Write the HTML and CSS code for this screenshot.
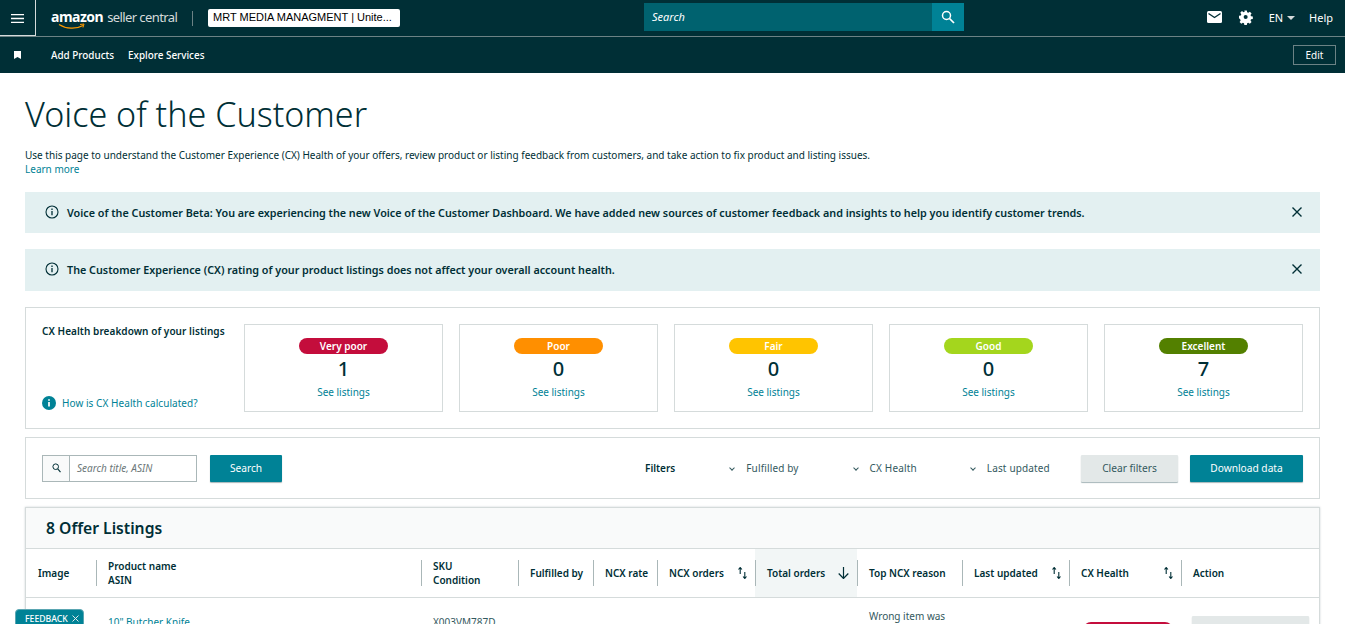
FILE: index.html
```html
<!DOCTYPE html>
<html lang="en">
<head>
  <meta charset="UTF-8">
  <title>Voice of the Customer</title>
  <link rel="stylesheet" href="styles.css">
</head>
<body>

<header class="topbar">
  <div class="topbar-left">
    <button class="menu-btn" aria-label="Menu">
      <svg width="13" height="9" viewBox="0 0 13 9"><path d="M0 .7h13M0 4.500h13M0 8.300h13" stroke="#fff" stroke-width="1.300"/></svg>
    </button>
    <div class="logo">
      <span class="logo-word">amazon</span><span class="logo-rest">seller central</span>
      <svg class="logo-smile" width="28" height="7" viewBox="0 0 28 7"><path d="M1 1.500C8 6 18 6.500 25 2.500" fill="none" stroke="#f90" stroke-width="1.200"/><path d="M22 1.500l4-.5-1 3.500" fill="none" stroke="#f90" stroke-width="1"/></svg>
    </div>
    <span class="logo-sep"></span>
    <div class="account">MRT MEDIA MANAGMENT | Unite...</div>
  </div>
  <div class="global-search">
    <span class="global-search-input">Search</span>
    <span class="global-search-btn">
      <svg width="14" height="14" viewBox="0 0 14 14"><circle cx="5.500" cy="5.500" r="4" fill="none" stroke="#fff" stroke-width="1.500"/><path d="M8.500 8.500L13 13" stroke="#fff" stroke-width="1.700"/></svg>
    </span>
  </div>
  <div class="topbar-right">
    <svg class="mail-icon" width="15" height="12" viewBox="0 0 15 12"><rect width="15" height="12" rx="1.500" fill="#fff"/><path d="M1.500 2.500l6 4 6-4" fill="none" stroke="#002f36" stroke-width="1.400"/></svg>
    <svg class="gear-icon" width="14" height="15" viewBox="0 0 16 16"><path d="M6.500 0h3l.4 2.200 1.400.6L13.200 1.500l2.100 2.100-1.300 1.900.6 1.400 2.200.4v3l-2.200.4-.6 1.400 1.300 1.900-2.100 2.100-1.900-1.300-1.400.6-.4 2.200h-3l-.4-2.200-1.400-.6-1.900 1.300-2.100-2.100 1.300-1.900-.6-1.400L0 9.500v-3l2.200-.4.6-1.400L1.500 2.800 3.600.7l1.900 1.300 1.400-.6z" transform="scale(.94)" fill="#fff"/><circle cx="7.600" cy="7.500" r="2.300" fill="#002f36"/></svg>
    <span class="lang">EN <i class="caret"></i></span>
    <span class="help">Help</span>
  </div>
</header>

<nav class="subbar">
  <svg class="bookmark" width="7" height="8" viewBox="0 0 7 8"><path d="M0 0h7v8L3.500 6 0 8z" fill="#fff"/></svg>
  <a class="subbar-link">Add Products</a>
  <a class="subbar-link">Explore Services</a>
  <button class="edit-btn">Edit</button>
</nav>

<main class="page">
  <h1>Voice of the Customer</h1>
  <p class="intro">Use this page to understand the Customer Experience (CX) Health of your offers, review product or listing feedback from customers, and take action to fix product and listing issues.<br><a>Learn more</a></p>

  <div class="notice">
    <svg width="14" height="14" viewBox="0 0 14 14"><circle cx="7" cy="7" r="6" fill="none" stroke="#002f36" stroke-width="1.100"/><path d="M7 6v4.200M7 3.600v1.400" stroke="#002f36" stroke-width="1.300"/></svg>
    <span class="notice-text">Voice of the Customer Beta: You are experiencing the new Voice of the Customer Dashboard. We have added new sources of customer feedback and insights to help you identify customer trends.</span>
    <svg class="notice-close" width="10" height="10" viewBox="0 0 10 10"><path d="M.5.500l9 9M9.500.500l-9 9" stroke="#002f36" stroke-width="1.400"/></svg>
  </div>
  <div class="notice notice-second">
    <svg width="14" height="14" viewBox="0 0 14 14"><circle cx="7" cy="7" r="6" fill="none" stroke="#002f36" stroke-width="1.100"/><path d="M7 6v4.200M7 3.600v1.400" stroke="#002f36" stroke-width="1.300"/></svg>
    <span class="notice-text">The Customer Experience (CX) rating of your product listings does not affect your overall account health.</span>
    <svg class="notice-close" width="10" height="10" viewBox="0 0 10 10"><path d="M.5.500l9 9M9.500.500l-9 9" stroke="#002f36" stroke-width="1.400"/></svg>
  </div>

  <section class="breakdown">
    <div class="breakdown-side">
      <div class="breakdown-title">CX Health breakdown of your listings</div>
      <a class="breakdown-help">
        <svg width="14" height="14" viewBox="0 0 14 14"><circle cx="7" cy="7" r="7" fill="#008296"/><path d="M7 6v4.500M7 3.200v1.600" stroke="#fff" stroke-width="1.700"/></svg>
        How is CX Health calculated?
      </a>
    </div>
    <div class="health-card"><span class="pill very-poor">Very poor</span><strong>1</strong><a>See listings</a></div>
    <div class="health-card"><span class="pill poor">Poor</span><strong>0</strong><a>See listings</a></div>
    <div class="health-card"><span class="pill fair">Fair</span><strong>0</strong><a>See listings</a></div>
    <div class="health-card"><span class="pill good">Good</span><strong>0</strong><a>See listings</a></div>
    <div class="health-card"><span class="pill excellent">Excellent</span><strong>7</strong><a>See listings</a></div>
  </section>

  <section class="toolbar">
    <div class="search-box">
      <span class="search-box-icon">
        <svg width="9" height="10" viewBox="0 0 9 10"><circle cx="3.700" cy="3.700" r="2.800" fill="none" stroke="#002f36" stroke-width="1"/><path d="M5.700 5.900L8.500 9.200" stroke="#002f36" stroke-width="1.100"/></svg>
      </span>
      <span class="search-box-input">Search title, ASIN</span>
    </div>
    <button class="btn btn-primary btn-search">Search</button>
    <span class="filters-label">Filters</span>
    <span class="filter filter-fulfilled"><i class="chev"></i>Fulfilled by</span>
    <span class="filter filter-health"><i class="chev"></i>CX Health</span>
    <span class="filter filter-updated"><i class="chev"></i>Last updated</span>
    <button class="btn btn-light">Clear filters</button>
    <button class="btn btn-primary btn-download">Download data</button>
  </section>

  <section class="listings">
    <h2>8 Offer Listings</h2>
    <div class="table-head">
      <div class="th"><span>Image</span></div>
      <div class="th"><span>Product name<br>ASIN</span></div>
      <div class="th"><span>SKU<br>Condition</span></div>
      <div class="th"><span>Fulfilled by</span></div>
      <div class="th"><span>NCX rate</span></div>
      <div class="th th-sort"><span>NCX orders</span><svg width="9" height="12" viewBox="0 0 9 12"><path d="M2.200 7V1M.5 2.500L2.200.5 3.900 2.500M6.800 5v6M5.100 9.500l1.700 2 1.700-2" fill="none" stroke="#002f36" stroke-width="1.100"/></svg></div>
      <div class="th th-sort th-active"><span>Total orders</span><svg width="11" height="12" viewBox="0 0 11 12"><path d="M5.500 0v11M.7 6.500l4.800 5 4.800-5" fill="none" stroke="#002f36" stroke-width="1.200"/></svg></div>
      <div class="th"><span>Top NCX reason</span></div>
      <div class="th th-sort"><span>Last updated</span><svg width="9" height="12" viewBox="0 0 9 12"><path d="M2.200 7V1M.5 2.500L2.200.5 3.900 2.500M6.800 5v6M5.100 9.500l1.700 2 1.700-2" fill="none" stroke="#002f36" stroke-width="1.100"/></svg></div>
      <div class="th th-sort"><span>CX Health</span><svg width="9" height="12" viewBox="0 0 9 12"><path d="M2.200 7V1M.5 2.500L2.200.5 3.900 2.500M6.800 5v6M5.100 9.500l1.700 2 1.700-2" fill="none" stroke="#002f36" stroke-width="1.100"/></svg></div>
      <div class="th"><span>Action</span></div>
    </div>
    <div class="table-row">
      <div></div>
      <div class="td-name"><a>10" Butcher Knife</a></div>
      <div class="td-sku">X003VM787D</div>
      <div></div><div></div><div></div><div></div>
      <div class="td-reason">Wrong item was</div>
      <div></div>
      <div class="td-health"><span class="pill very-poor"></span></div>
      <div class="td-action"><button class="btn btn-light"></button></div>
    </div>
  </section>
</main>

<div class="feedback">
  <span>FEEDBACK</span>
  <svg width="7" height="7" viewBox="0 0 7 7"><path d="M.5.500l6 6M6.500.500l-6 6" stroke="#e3e8e8" stroke-width="1"/></svg>
</div>

</body>
</html>
```

FILE: styles.css
```css
html, body {
  height: 624px;
  overflow: hidden;
}

body {
  margin: 0;
  font-family: "Noto Sans", "Open Sans", Arial, sans-serif;
  font-size: 11px;
  color: #002f36;
  background-color: #fff;
}

a {
  color: #008296;
}

button {
  font-family: inherit;
  cursor: pointer;
}

/* top bars */
.topbar {
  height: 36px;
  background-color: #002f36;
  border-bottom: 1px solid #6c8285;
  display: flex;
  align-items: center;
  justify-content: space-between;
  position: relative;
  color: #fff;
}

.topbar-left {
  display: flex;
  align-items: center;
  height: 100%;
}

.menu-btn {
  width: 36px;
  height: 36px;
  padding: 0;
  background: none;
  border: 1px solid #d5dbdb;
  border-width: 0 1px 1px 0;
}

.logo {
  margin-left: 15px;
  position: relative;
  white-space: nowrap;
  font-size: 14px;
  line-height: 16px;
  width: 127px;
  top: -1px;
}

.logo-word {
  font-weight: 700;
  letter-spacing: -0.5px;
  margin-right: 4px;
}

.logo-rest {
  font-size: 13px;
  font-weight: 400;
  letter-spacing: -0.6px;
  color: #d5dbdb;
}

.logo-smile {
  position: absolute;
  left: 7px;
  top: 14px;
}

.logo-sep {
  width: 1px;
  height: 15px;
  background-color: #6c8285;
  margin: 0 15px 0 14px;
}

.account {
  width: 192px;
  height: 18px;
  box-sizing: border-box;
  background-color: #fff;
  border-radius: 2px;
  color: #000;
  font-family: "Liberation Sans", Arial, sans-serif;
  font-size: 11px;
  line-height: 17px;
  padding-left: 5px;
  white-space: nowrap;
}

.global-search {
  position: absolute;
  left: 644px;
  top: 3px;
  width: 320px;
  height: 28px;
  display: flex;
  background-color: #00626f;
}

.global-search-input {
  flex: 1;
  padding-left: 8px;
  font-style: italic;
  font-size: 11px;
  line-height: 28px;
}

.global-search-btn {
  width: 32px;
  background-color: #008296;
  display: flex;
  align-items: center;
  justify-content: center;
}

.topbar-right {
  display: flex;
  align-items: center;
  gap: 16px;
  padding: 0 12px 2px 0;
}

.mail-icon {
  margin-right: 1px;
}

.lang {
  margin-right: -2px;
}

.caret {
  display: inline-block;
  border: 4px solid transparent;
  border-top-color: #d5dbdb;
  border-bottom: 0;
  vertical-align: 2px;
  margin-left: 1px;
}

.subbar {
  height: 36px;
  background-color: #002f36;
  display: flex;
  align-items: center;
  color: #fff;
  padding: 0 9px 0 14px;
}

.bookmark {
  margin-right: 30px;
}

.subbar-link {
  color: #fff;
  font-size: 9.900px;
  font-weight: 500;
  margin-right: 14px;
}

.edit-btn {
  margin-left: auto;
  width: 43px;
  height: 20px;
  padding: 0;
  background: none;
  border: 1px solid #6c8285;
  color: #fff;
  font-size: 10px;
}

/* page */
.page {
  padding: 0 25px;
}

h1 {
  font-size: 34.100px;
  font-weight: 300;
  line-height: 42px;
  margin: 20px 0 0;
}

.intro {
  margin: 13px 0 0;
  line-height: 14px;
  font-size: 10px;
}

.notice {
  height: 41px;
  box-sizing: border-box;
  margin-top: 16px;
  background-color: #e3f0f1;
  display: flex;
  align-items: center;
  padding: 0 18px 1px 20px;
  font-weight: 600;
  font-size: 10.770px;
}

.notice-second {
  height: 42px;
  margin-top: 16px;
  padding-bottom: 2px;
}

.notice-text {
  margin-left: 8px;
}

.notice-close {
  margin-left: auto;
}

.breakdown {
  margin-top: 16px;
  height: 122px;
  box-sizing: border-box;
  border: 1px solid #d5dbdb;
  padding: 16px;
  display: flex;
  gap: 16px;
}

.breakdown-side {
  width: 186px;
  display: flex;
  flex-direction: column;
  justify-content: space-between;
  font-size: 10px;
  letter-spacing: 0.06px;
}

.breakdown-title {
  font-weight: 600;
}

.breakdown-help {
  display: flex;
  align-items: center;
  gap: 6px;
  font-size: 10px;
  margin-bottom: 2px;
}

.health-card {
  flex: 1;
  border: 1px solid #d5dbdb;
  display: flex;
  flex-direction: column;
  align-items: center;
  padding-top: 13px;
}

.health-card strong {
  font-size: 20px;
  font-weight: 500;
  line-height: 26px;
  margin-top: 2px;
}

.health-card a {
  font-size: 10px;
  line-height: 14px;
  margin-top: 3px;
}

.pill {
  display: block;
  width: 89px;
  height: 16px;
  border-radius: 8px;
  color: #fff;
  text-align: center;
  font-size: 10px;
  font-weight: 600;
  line-height: 16px;
}

.very-poor { background-color: #c40d3c; }
.poor { background-color: #ff8f00; }
.fair { background-color: #ffc400; }
.good { background-color: #a4d61d; }
.excellent { background-color: #538000; }

.toolbar {
  margin-top: 8px;
  height: 62px;
  box-sizing: border-box;
  border: 1px solid #d5dbdb;
  display: flex;
  align-items: center;
  padding: 0 16px;
  position: relative;
}

.search-box {
  width: 155px;
  height: 27px;
  box-sizing: border-box;
  border: 1px solid #aab7b8;
  display: flex;
}

.search-box-icon {
  width: 26px;
  border-right: 1px solid #aab7b8;
  display: flex;
  align-items: center;
  justify-content: center;
  background-color: #f9fafa;
}

.search-box-input {
  padding-left: 7px;
  font-style: italic;
  font-size: 10px;
  line-height: 25px;
  color: #6c7778;
}

.btn {
  height: 27px;
  border: none;
  border-radius: 1px;
  font-size: 10.200px;
  box-shadow: 0 1px 1px rgba(0,47,54,0.35);
}

.btn-primary {
  background-color: #008296;
  color: #fff;
}

.btn-light {
  background-color: #e3e8e8;
  color: #33595e;
}

.btn-search {
  width: 72px;
  margin-left: 13px;
}

.filters-label {
  margin-left: 363px;
  font-size: 10px;
  font-weight: 600;
}

.filter {
  font-size: 10px;
  letter-spacing: 0.15px;
  color: #33595e;
  white-space: nowrap;
}

.filter-fulfilled { margin-left: 54px; }
.filter-health { margin-left: 54px; }
.filter-updated { margin-left: 53px; }

.chev {
  display: inline-block;
  width: 3px;
  height: 3px;
  border: solid #33595e;
  border-width: 0 1px 1px 0;
  transform: rotate(45deg);
  margin: 0 12px 2px 1px;
}

.toolbar .btn-light {
  width: 97px;
  margin-left: auto;
}

.btn-download {
  width: 113px;
  margin-left: 12px;
}

/* listings table */
.listings {
  margin-top: 8px;
  border: 1px solid #d5dbdb;
  box-shadow: 0 0 2px rgba(0,47,54,0.2);
}

h2 {
  margin: 0;
  height: 40px;
  padding-left: 20px;
  background-color: #f9fafa;
  border-bottom: 1px solid #d5dbdb;
  font-size: 15.700px;
  font-weight: 600;
  line-height: 40px;
}

.table-head, .table-row {
  display: grid;
  grid-template-columns: 70px 325px 97px 75px 64px 98px 102px 105px 107px 112px 1fr;
}

.table-head {
  height: 48px;
  border-bottom: 1px solid #d5dbdb;
  font-size: 10px;
  font-weight: 600;
}

.th {
  display: flex;
  align-items: center;
  justify-content: space-between;
  padding: 0 8px 0 12px;
  line-height: 14px;
  position: relative;
}

.th:not(:first-child)::before {
  content: "";
  position: absolute;
  left: 0;
  top: 11px;
  bottom: 11px;
  width: 1px;
  background-color: #aab7b8;
}

.th-active {
  background-color: #f2f6f6;
}

.table-row {
  font-size: 10px;
  color: #33595e;
  padding-top: 11px;
}

.td-name, .td-sku, .td-reason {
  padding-left: 12px;
}

.td-name, .td-sku {
  padding-top: 6px;
}

.td-health {
  padding: 13px 0 0 14px;
}

.td-health .pill {
  width: 90px;
}

.td-action {
  padding: 7px 0 0 11px;
}

.td-action .btn {
  width: 117px;
  display: block;
}

.feedback {
  position: fixed;
  left: 15px;
  bottom: -8px;
  height: 23px;
  width: 69px;
  box-sizing: border-box;
  padding: 3px 0 0 9px;
  background-color: #008296;
  border: 1px solid #5aa6b2;
  border-radius: 4px 4px 0 0;
  color: #fff;
  font-size: 8.700px;
  font-weight: 500;
  line-height: 12px;
  white-space: nowrap;
  display: flex;
  align-items: flex-start;
  gap: 4px;
}

.feedback svg {
  margin-top: 2px;
}
```
